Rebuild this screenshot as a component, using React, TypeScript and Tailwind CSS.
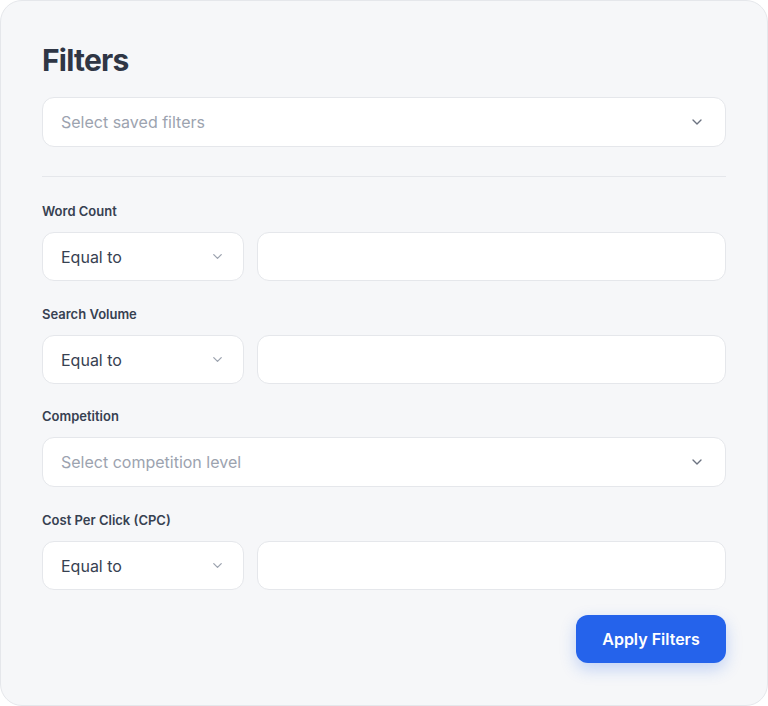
import { ChevronDown } from 'lucide-react'

function Label({ children }: { children: React.ReactNode }) {
  return <p className="text-[13px] leading-4 font-semibold text-[#374151] mb-[13px]">{children}</p>
}

function FullSelect({ placeholder }: { placeholder: string }) {
  return (
    <div className="h-[50px] bg-white border border-[#e5e7eb] rounded-xl flex items-center justify-between pl-[18px] pr-[20px]">
      <span className="text-base text-[#9ca3af]">{placeholder}</span>
      <ChevronDown className="w-4 h-4 text-[#6b7280]" strokeWidth={2} />
    </div>
  )
}

function OperatorRow() {
  return (
    <div className="flex gap-[13px]">
      <div className="w-[202px] h-[49px] bg-white border border-[#e5e7eb] rounded-xl flex items-center justify-between pl-[18px] pr-[18px]">
        <span className="text-base text-[#374151]">Equal to</span>
        <ChevronDown className="w-[15px] h-[15px] text-[#9ca3af]" strokeWidth={2} />
      </div>
      <input
        type="text"
        className="flex-1 h-[49px] bg-white border border-[#e5e7eb] rounded-xl px-4 text-base focus:outline-none"
      />
    </div>
  )
}

export default function App() {
  return (
    <div className="w-[768px] h-[706px] bg-white" style={{ fontFamily: 'Inter, "Noto Sans", sans-serif' }}>
      <div className="h-full bg-[#f6f7f9] border border-[#e5e7eb] rounded-[22px] px-[41px] pt-[41px]">
        <h1 className="text-[30px] leading-9 font-bold text-[#2f3645] tracking-tight mb-[19px]">Filters</h1>

        <FullSelect placeholder="Select saved filters" />

        <div className="h-px bg-[#e5e7eb] mt-[29px] mb-[26px]" />

        <Label>Word Count</Label>
        <OperatorRow />

        <div className="mt-[25px]">
          <Label>Search Volume</Label>
          <OperatorRow />
        </div>

        <div className="mt-[24px]">
          <Label>Competition</Label>
          <FullSelect placeholder="Select competition level" />
        </div>

        <div className="mt-[25px]">
          <Label>Cost Per Click (CPC)</Label>
          <OperatorRow />
        </div>

        <div className="flex justify-end mt-[25px]">
          <button className="w-[150px] h-[48px] bg-[#2563eb] text-white text-base font-semibold rounded-xl shadow-[0_6px_16px_rgba(37,99,235,0.25)]">
            Apply Filters
          </button>
        </div>
      </div>
    </div>
  )
}
